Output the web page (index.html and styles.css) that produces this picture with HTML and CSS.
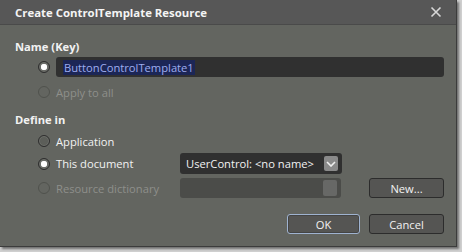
FILE: index.html
```html
<!DOCTYPE html>
<html>
<head>
<meta charset="utf-8">
<link rel="stylesheet" href="styles.css">
</head>
<body>
<div class="dialog">
  <div class="titlebar">
    <span class="title">Create ControlTemplate Resource</span>
    <svg class="close" width="12" height="12" viewBox="0 0 12 12"><path d="M1.5 1.5 L10.5 10.5 M10.5 1.5 L1.5 10.5" stroke="#d8d8d8" stroke-width="1.6" fill="none"/></svg>
  </div>
  <div class="content">
    <div class="heading h1">Name (Key)</div>
    <div class="row name-row">
      <span class="radio checked"></span>
      <div class="textbox"><span class="sel">ButtonControlTemplate1</span></div>
    </div>
    <div class="row apply-row">
      <span class="radio disabled"></span>
      <span class="label disabled">Apply to all</span>
    </div>
    <div class="heading h2">Define in</div>
    <div class="row app-row">
      <span class="radio"></span>
      <span class="label">Application</span>
    </div>
    <div class="row doc-row">
      <div class="opt">
        <span class="radio checked"></span>
        <span class="label">This document</span>
      </div>
      <div class="combo">
        <span class="combo-text">UserControl: &lt;no name&gt;</span>
        <span class="combo-btn"><svg width="10" height="6" viewBox="0 0 10 6"><path d="M1 1 L5 5 L9 1" stroke="#f0f0f0" stroke-width="1.6" fill="none"/></svg></span>
      </div>
    </div>
    <div class="row dict-row">
      <div class="opt">
        <span class="radio disabled"></span>
        <span class="label disabled">Resource dictionary</span>
      </div>
      <div class="combo off">
        <span class="combo-text"></span>
        <span class="combo-btn off"></span>
      </div>
      <button class="btn new">New...</button>
    </div>
    <div class="row buttons">
      <button class="btn ok">OK</button>
      <button class="btn">Cancel</button>
    </div>
  </div>
</div>
</body>
</html>
```
FILE: styles.css
```css
html, body {
  margin: 0;
  padding: 0;
}
body {
  width: 462px;
  height: 252px;
  background: #cfcfcf;
  font-family: "Open Sans", "Noto Sans", sans-serif;
  font-size: 11.2px;
  color: #f2f2f2;
  overflow: hidden;
}
.dialog {
  width: 456px;
  height: 246px;
  background: #636560;
  border-right: 1px solid #3c3c3c;
  border-bottom: 1px solid #3c3c3c;
  box-shadow: 2px 2px 2px rgba(0,0,0,0.45);
  display: flex;
  flex-direction: column;
}
.titlebar {
  height: 24px;
  background: #575757;
  border-bottom: 1px solid #4a4a4a;
  display: flex;
  align-items: center;
  justify-content: space-between;
  padding: 0 14px 0 15px;
}
.title {
  font-weight: bold;
  font-size: 11.4px;
  color: #f4f4f4;
}
.close {
  display: block;
}
.content {
  padding: 0 12px 0 15px;
  display: flex;
  flex-direction: column;
}
.heading {
  font-weight: bold;
  height: 16px;
  line-height: 16px;
}
.h1 { margin-top: 14px; }
.h2 { margin-top: 12px; }
.row {
  display: flex;
  align-items: center;
}
.name-row { margin-top: 2px; height: 20px; padding-left: 23px; }
.apply-row { margin-top: 7px; height: 16px; padding-left: 23px; }
.app-row { margin-top: 5px; height: 16px; padding-left: 23px; }
.doc-row { margin-top: 4px; height: 21px; padding-left: 23px; }
.dict-row { margin-top: 4px; height: 20px; padding-left: 23px; }
.buttons { margin-top: 16px; height: 20px; justify-content: flex-end; gap: 9px; }
.opt {
  display: flex;
  align-items: center;
  width: 142px;
}
.radio {
  width: 10px;
  height: 10px;
  border-radius: 50%;
  border: 1px solid #2e2e2e;
  box-shadow: inset 0 0 0 1px #6e706b;
  background: #5c5e59;
  margin-right: 6px;
  flex: none;
  position: relative;
}
.radio.checked::after {
  content: "";
  position: absolute;
  left: 2px;
  top: 2px;
  width: 6px;
  height: 6px;
  border-radius: 50%;
  background: #ffffff;
  box-shadow: 0 0 1px #ffffff;
}
.radio.disabled {
  border-color: #50524d;
  box-shadow: none;
  background: transparent;
}
.label.disabled { color: #8e8f8b; }
.textbox {
  flex: 1;
  height: 20px;
  background: #303030;
  border-radius: 3px;
  display: flex;
  align-items: center;
  padding-left: 7px;
}
.sel {
  background: #1c2656;
  color: #9fadf0;
  line-height: 15px;
  padding: 0 1px;
}
.combo {
  width: 162px;
  height: 21px;
  background: #303030;
  border-radius: 3px;
  display: flex;
  align-items: center;
  justify-content: space-between;
  padding: 0 4px 0 6px;
  box-sizing: border-box;
}
.combo.off {
  height: 20px;
  background: #4b4c49;
  width: 161px;
}
.combo-btn {
  width: 14px;
  height: 15px;
  background: #8a8a8a;
  border-radius: 2px;
  display: flex;
  align-items: center;
  justify-content: center;
}
.combo-btn.off { background: #676866; height: 16px; }
.btn {
  font-family: inherit;
  font-size: 11.2px;
  color: #f2f2f2;
  background: #555553;
  border: 1px solid #2c2c2c;
  border-radius: 3px;
  height: 20px;
  width: 75px;
  padding: 0;
}
.new { margin-left: 28px; }
.ok {
  width: 73px;
  border-color: #9fb3d0;
  box-shadow: inset 0 0 0 1px #444;
}
```
